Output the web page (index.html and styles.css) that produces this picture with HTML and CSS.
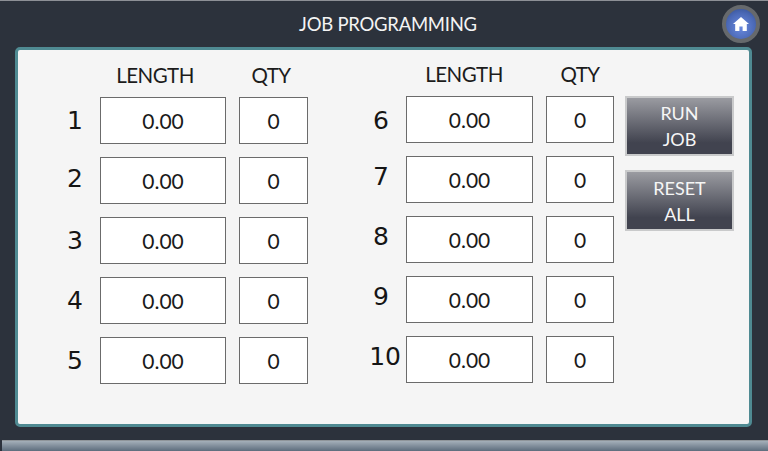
FILE: index.html
```html
<!DOCTYPE html>
<html lang="en">
<head>
<meta charset="utf-8">
<title>Job Programming</title>
<link rel="stylesheet" href="styles.css">
</head>
<body>
<div class="screen">
  <header class="topbar">
    <h1 class="title">JOB PROGRAMMING</h1>
    <button class="home" aria-label="Home">
      <svg class="home-icon" viewBox="0 0 16 14" width="16" height="14"><path d="M8 0 L16 7 L13.8 7 L13.8 14 L9.6 14 L9.6 9.6 L6.4 9.6 L6.4 14 L2.2 14 L2.2 7 L0 7 Z" fill="#fff"/></svg>
    </button>
  </header>
  <main class="panel">
    <section class="block block-left">
      <div class="head"></div><div class="head head-length">LENGTH</div><div class="head head-qty">QTY</div>
      <div class="num">1</div><div class="box">0.00</div><div class="box box-qty">0</div>
      <div class="num up-sm">2</div><div class="box">0.00</div><div class="box box-qty">0</div>
      <div class="num">3</div><div class="box">0.00</div><div class="box box-qty">0</div>
      <div class="num">4</div><div class="box">0.00</div><div class="box box-qty">0</div>
      <div class="num">5</div><div class="box">0.00</div><div class="box box-qty">0</div>
    </section>
    <section class="block block-right">
      <div class="head"></div><div class="head head-length">LENGTH</div><div class="head head-qty">QTY</div>
      <div class="num down">6</div><div class="box">0.00</div><div class="box box-qty">0</div>
      <div class="num up">7</div><div class="box">0.00</div><div class="box box-qty">0</div>
      <div class="num up">8</div><div class="box">0.00</div><div class="box box-qty">0</div>
      <div class="num up">9</div><div class="box">0.00</div><div class="box box-qty">0</div>
      <div class="num up ten">10</div><div class="box">0.00</div><div class="box box-qty">0</div>
    </section>
    <aside class="actions">
      <button class="action">RUN<br>JOB</button>
      <button class="action action-tall">RESET<br>ALL</button>
    </aside>
  </main>
  <footer class="bottombar"></footer>
</div>
</body>
</html>
```
FILE: styles.css
```css
* { box-sizing: border-box; }
html, body { margin: 0; padding: 0; }
body { width: 768px; height: 451px; overflow: hidden; background: #2c323c; }
.screen { display: flex; flex-direction: column; height: 451px; font-family: Lato, "Open Sans", sans-serif; border-top: 1px solid #8d9096; }
.topbar { height: 46px; position: relative; display: flex; align-items: center; justify-content: center; }
.title { margin: 0 0 1px; font-size: 18.5px; font-weight: 400; letter-spacing: -0.25px; color: #f4f4f4; transform: translateX(4px); }
.home { position: absolute; left: 722px; top: 4px; width: 38px; height: 38px; padding: 0; border-radius: 50%; border: 4px solid #66696c; background: radial-gradient(circle at 50% 60%, #6a8ae0 0%, #4a68b5 60%, #2f4a8a 100%); display: flex; align-items: center; justify-content: center; }
.panel { margin-left: 15px; width: 737px; height: 380px; background: #f5f5f5; border: 3px solid #4f8a92; border-radius: 5px; display: flex; padding: 12px 0 0 32px; }
.block { display: grid; grid-template-rows: 22px repeat(5, 47px); row-gap: 13px; align-content: start; }
.block-left { grid-template-columns: 50px 126px 82px; margin-right: 48px; }
.block-right { grid-template-columns: 50px 127px 81px; margin-right: 11px; margin-top: -1px; }
.box-qty { margin-left: 13px; }
.head { font-size: 20.5px; letter-spacing: -0.5px; color: #1c1c1c; text-align: center; line-height: 26px; white-space: nowrap; }
.block-left .head-length { padding-right: 16px; }
.block-right .head-length { padding-right: 11px; }
.block-left .head-qty { padding-left: 8px; }
.block-right .head-qty { padding-left: 13px; }
.num { font-family: "DejaVu Sans", sans-serif; font-size: 25px; color: #151515; display: flex; align-items: center; justify-content: center; }
.num.up { padding-bottom: 7px; }
.num.up-sm { padding-bottom: 4px; }
.num.down { padding-top: 2px; }
.num.ten { justify-content: flex-end; padding-right: 5px; }
.box { background: #fff; border: 1px solid #6b6b6b; display: flex; align-items: center; justify-content: center; font-size: 21px; color: #1a1a1a; }
.actions { display: flex; flex-direction: column; gap: 14px; padding-top: 34px; }
.action { width: 109px; height: 60px; padding: 0; border: 2px solid #c9cacb; background: linear-gradient(#9a9ba1, #41434f 80%); color: #f6f6f6; font: 400 18px/26px Lato, sans-serif; }
.action-tall { height: 61px; }
.bottombar { margin: 13px 0 0 2px; flex: 1; background: linear-gradient(#a4afb9, #5d6d7d); border-top: 1px solid #8f959a; }
```
